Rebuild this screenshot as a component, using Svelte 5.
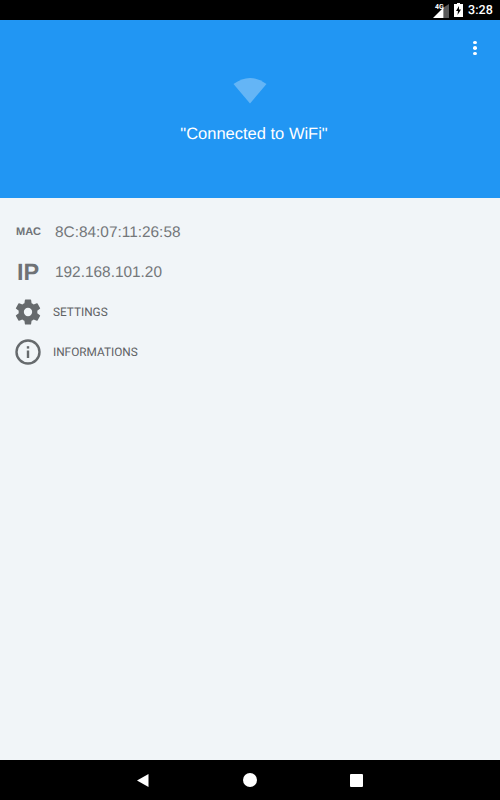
<script lang="ts">
  const rows = [
    { tag: 'MAC', value: '8C:84:07:11:26:58' },
    { tag: 'IP', value: '192.168.101.20' },
  ]
</script>

<div class="screen">
  <!-- Android status bar -->
  <div class="status-bar">
    <span class="net">4G</span>
    <svg class="signal" width="17" height="14" viewBox="0 0 17 14">
      <path d="M11.5 3.5 L11.5 14 L1 14 Z" fill="#fff" />
      <path d="M11.5 3.5 L17 0 L17 14 L11.5 14 Z" fill="#fff" opacity="0.35" />
    </svg>
    <svg class="battery" width="9" height="14" viewBox="0 0 9 14">
      <path d="M3 0 H6 V1 H9 V14 H0 V1 H3 Z" fill="#fff" />
      <path d="M5 3 L2 8 H4 L3.5 12 L7 6.5 H5 Z" fill="#000" />
    </svg>
    <span class="clock">3:28</span>
  </div>

  <header class="hero">
    <div class="menu" aria-label="More options">
      <span></span><span></span><span></span>
    </div>
    <svg class="wifi" width="34" height="28" viewBox="0 0 34 28">
      <path d="M0.5 8 Q17 -4 33.5 8 L17 27.5 Z" fill="#fff" opacity="0.3" />
    </svg>
    <h1>"Connected to WiFi"</h1>
  </header>

  <main class="content">
    {#each rows as row}
      <div class="row">
        <span class="tag" class:big={row.tag === 'IP'}>{row.tag}</span>
        <span class="value">{row.value}</span>
      </div>
    {/each}

    <div class="row">
      <svg class="tag-icon" width="26" height="26" viewBox="2.2 2 19.6 20">
        <path
          fill="#666a6d"
          d="M19.14 12.94c.04-.3.06-.61.06-.94s-.02-.64-.07-.94l2.03-1.58a.49.49 0 0 0 .12-.61l-1.92-3.32a.49.49 0 0 0-.59-.22l-2.39.96a7 7 0 0 0-1.62-.94l-.36-2.54a.48.48 0 0 0-.48-.41h-3.84a.48.48 0 0 0-.47.41l-.36 2.54c-.59.24-1.13.57-1.62.94l-2.39-.96a.49.49 0 0 0-.59.22L2.74 8.87a.48.48 0 0 0 .12.61l2.03 1.58c-.05.3-.09.63-.09.94s.02.64.07.94l-2.03 1.58a.49.49 0 0 0-.12.61l1.92 3.32c.12.22.37.29.59.22l2.39-.96c.5.38 1.03.7 1.62.94l.36 2.54c.05.24.24.41.48.41h3.84c.24 0 .44-.17.47-.41l.36-2.54c.59-.24 1.13-.56 1.62-.94l2.39.96c.22.08.47 0 .59-.22l1.92-3.32a.48.48 0 0 0-.12-.61l-2.01-1.58zM12 15.2A3.2 3.2 0 1 1 12 8.8a3.2 3.2 0 0 1 0 6.4z"
        />
      </svg>
      <span class="action">SETTINGS</span>
    </div>

    <div class="row">
      <svg class="tag-icon" width="26" height="26" viewBox="0 0 26 26">
        <circle cx="13" cy="13" r="11.5" fill="none" stroke="#666a6d" stroke-width="2.4" />
        <rect x="11.8" y="11.5" width="2.4" height="7.5" fill="#666a6d" />
        <rect x="11.8" y="7.2" width="2.4" height="2.4" fill="#666a6d" />
      </svg>
      <span class="action">INFORMATIONS</span>
    </div>
  </main>

  <!-- Android nav bar -->
  <nav class="nav-bar">
    <svg width="13" height="15" viewBox="0 0 13 15"><path d="M11.5 1 V14 L0 7.5 Z" fill="#fff" /></svg>
    <span class="home"></span>
    <span class="recents"></span>
  </nav>
</div>

<style>
  :global(body) {
    margin: 0;
  }

  .screen {
    width: 500px;
    height: 800px;
    display: flex;
    flex-direction: column;
    background: #f1f5f8;
    font-family: Roboto, "Liberation Sans", sans-serif;
    text-rendering: geometricPrecision;
  }

  /* --- Status bar --- */

  .status-bar {
    position: relative;
    height: 20px;
    flex-shrink: 0;
    background: #000;
    display: flex;
    align-items: center;
    justify-content: flex-end;
    padding-right: 7px;
    color: #fff;
  }

  .signal {
    margin-right: 5px;
    margin-top: 1px;
  }

  .net {
    position: absolute;
    left: 435px;
    top: 3px;
    font-size: 7px;
    font-weight: 700;
    line-height: 8px;
  }

  .battery {
    margin-right: 5px;
  }

  .clock {
    font-size: 12.5px;
    font-weight: 500;
    letter-spacing: 0.1px;
  }

  /* --- Header --- */

  .hero {
    position: relative;
    height: 178px;
    flex-shrink: 0;
    background: #2196f3;
    display: flex;
    flex-direction: column;
    align-items: center;
    padding-top: 56px;
    box-sizing: border-box;
  }

  .menu {
    position: absolute;
    top: 21px;
    right: 23px;
    display: flex;
    flex-direction: column;
    gap: 2px;
  }

  .menu span {
    width: 4px;
    height: 3.4px;
    border-radius: 50%;
    background: #fff;
  }

  .wifi {
    display: block;
  }

  h1 {
    margin: 20px 0 0 8px;
    font-family: "Liberation Sans", Arial, sans-serif;
    font-size: 16.5px;
    font-weight: 400;
    line-height: 20px;
    color: #fff;
  }

  /* --- Rows --- */

  .content {
    flex: 1;
    padding: 14px 15px 0;
  }

  .row {
    height: 40px;
    display: flex;
    align-items: center;
  }

  .tag {
    width: 39px;
    padding-left: 1px;
    flex-shrink: 0;
    font-family: "Liberation Sans", Arial, sans-serif;
    font-size: 11px;
    font-weight: 700;
    color: #6f7276;
    position: relative;
  }

  .tag.big {
    padding-left: 2px;
    width: 38px;
    font-size: 23.5px;
  }

  .value {
    font-family: "Liberation Sans", Arial, sans-serif;
    font-size: 15.4px;
    color: #74777a;
    margin-top: 1px;
  }

  .tag-icon {
    flex-shrink: 0;
    margin-right: 12px;
  }

  .action {
    font-size: 11.8px;
    font-weight: 400;
    color: #5f6265;
  }

  /* --- Nav bar --- */

  .nav-bar {
    height: 40px;
    flex-shrink: 0;
    background: #000;
    display: flex;
    align-items: center;
    justify-content: center;
    gap: 93px;
  }

  .home {
    width: 14px;
    height: 14px;
    border-radius: 50%;
    background: #fff;
  }

  .recents {
    width: 13px;
    height: 13px;
    border-radius: 1px;
    background: #fff;
  }
</style>
